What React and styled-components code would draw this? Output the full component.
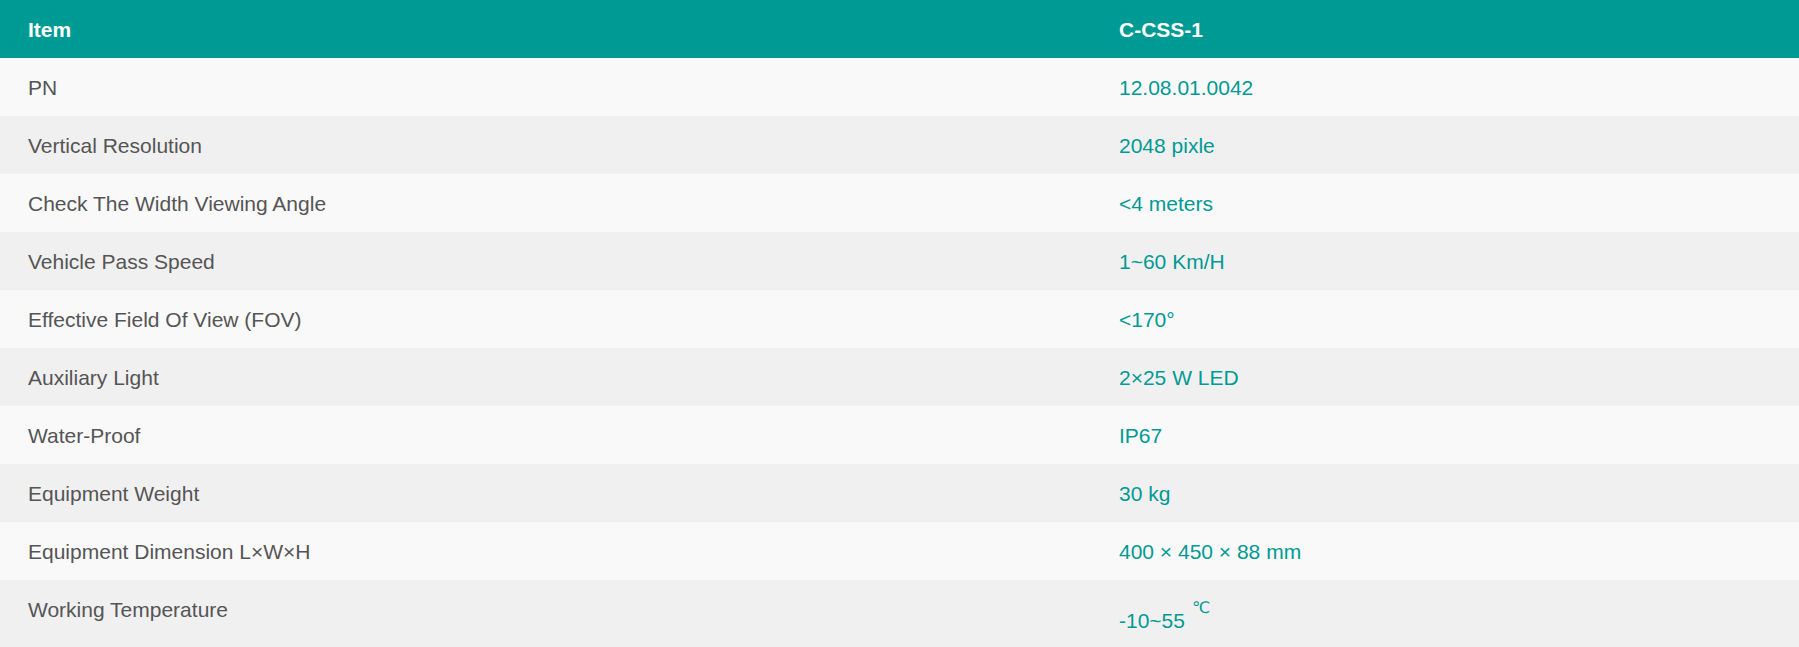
import React from "react"
import styled, { createGlobalStyle } from "styled-components"

const GlobalStyle = createGlobalStyle`
  html, body {
    margin: 0;
    padding: 0;
    background: #ffffff;
  }
  body {
    font-family: "Liberation Sans", Arial, sans-serif;
  }
`

const SpecTable = styled.table`
  width: 100%;
  border-collapse: collapse;
  table-layout: fixed;
  font-family: "Liberation Sans", Arial, sans-serif;
  font-size: 21px;
  line-height: 30px;

  th,
  td {
    box-sizing: border-box;
  }
`

const HeadCell = styled.th`
  background-color: #009a94;
  color: #ffffff;
  font-weight: bold;
  text-align: left;
  vertical-align: top;
  height: 58px;
  padding: 15px 28px 13px;
  width: ${(props) => props.$width || "auto"};
`

const Row = styled.tr`
  background-color: ${(props) => (props.$odd ? "#f9f9f9" : "#f0f0f0")};
`

const Cell = styled.td`
  color: ${(props) => (props.$value ? "#009a94" : "#555555")};
  text-align: left;
  vertical-align: top;
  padding: 15px 28px 13px;
`

const Unit = styled.sup`
  font-family: "DejaVu Sans", sans-serif;
  font-size: 16px;
  line-height: 25px;
  vertical-align: 15px;
  margin-left: 7px;
`

const specs = [
  { label: "PN", value: "12.08.01.0042" },
  { label: "Vertical Resolution", value: "2048 pixle" },
  { label: "Check The Width Viewing Angle", value: "<4 meters" },
  { label: "Vehicle Pass Speed", value: "1~60 Km/H" },
  { label: "Effective Field Of View (FOV)", value: "<170°" },
  { label: "Auxiliary Light", value: "2×25 W LED" },
  { label: "Water-Proof", value: "IP67" },
  { label: "Equipment Weight", value: "30 kg" },
  { label: "Equipment Dimension L×W×H", value: "400 × 450 × 88 mm" },
  { label: "Working Temperature", value: "-10~55", unit: "℃" },
]

const App = () => {
  return (
    <>
      <GlobalStyle />
      <SpecTable>
        <thead>
          <tr>
            <HeadCell $width="1091px">Item</HeadCell>
            <HeadCell>C-CSS-1</HeadCell>
          </tr>
        </thead>
        <tbody>
          {specs.map((spec, i) => (
            <Row key={spec.label} $odd={i % 2 === 0}>
              <Cell>{spec.label}</Cell>
              <Cell $value>
                {spec.value}
                {spec.unit && <Unit>{spec.unit}</Unit>}
              </Cell>
            </Row>
          ))}
        </tbody>
      </SpecTable>
    </>
  )
}

export default App
